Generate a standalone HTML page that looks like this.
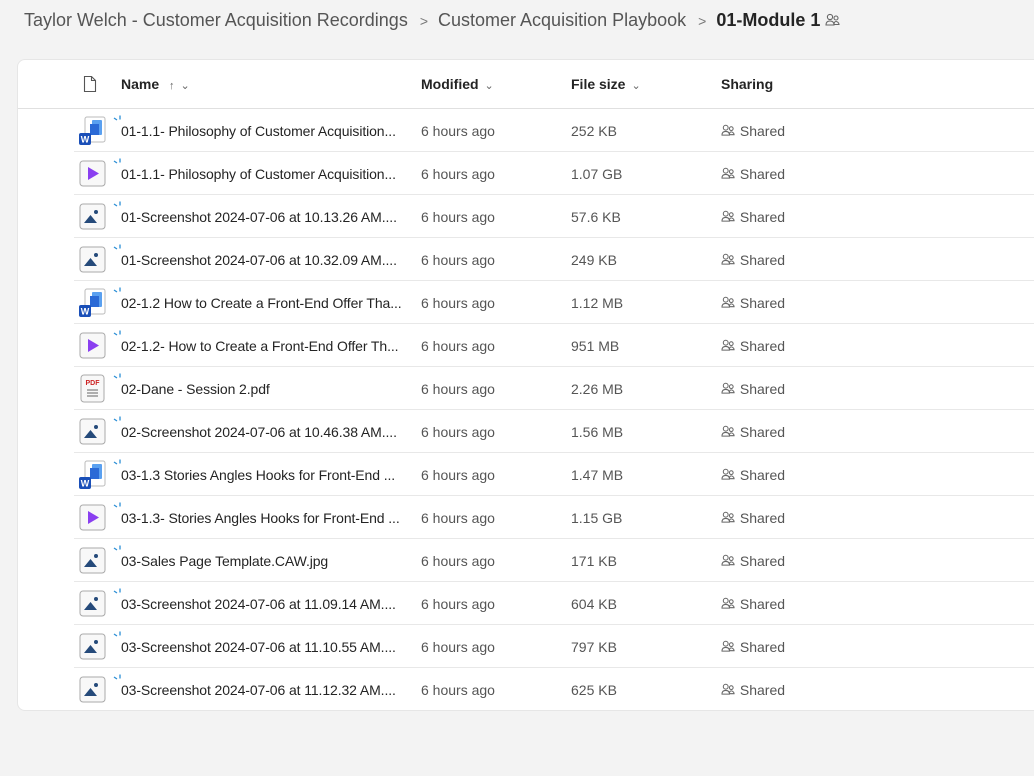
<!DOCTYPE html>
<html><head><meta charset="utf-8"><style>
*{margin:0;padding:0;box-sizing:border-box}
body{width:1034px;height:776px;background:#f3f3f3;font-family:"Liberation Sans",sans-serif;color:#242424;position:relative;overflow:hidden}
.bc{position:absolute;top:9px;left:24px;font-size:18px;color:#555;white-space:nowrap;line-height:22px}
.bc .sep{color:#777;font-size:14px;margin:0 10px 0 12px}
.bc b{color:#242424;font-weight:bold}
.card{position:absolute;left:17px;top:59px;width:1040px;height:652px;background:#fff;border-radius:8px;border:1px solid #e6e6e6}
.hdr{position:absolute;top:0;left:0;right:0;height:49px;border-bottom:1px solid #e0e0e0;font-size:14px;font-weight:bold}
.hdr .h{position:absolute;top:16px;white-space:nowrap}
.chev{color:#666;font-weight:normal;font-size:11px;margin-left:6px}
.row{position:absolute;left:56px;right:0;height:43px;border-bottom:1px solid #e8e8e8;font-size:14px}
.row.last{border-bottom:none}
.row .ic{position:absolute;left:3px;top:6px}
.row .nm{position:absolute;left:47px;top:14px;white-space:nowrap;letter-spacing:-0.1px}
.row .md{position:absolute;left:347px;top:14px;color:#555}
.row .sz{position:absolute;left:497px;top:14px;color:#555}
.row .sh{position:absolute;left:647px;top:14px;color:#555}
.sp{position:absolute;left:39px;top:6px}
</style></head><body>
<div class="bc">Taylor Welch - Customer Acquisition Recordings<span class="sep">&gt;</span>Customer Acquisition Playbook<span class="sep">&gt;</span><b>01-Module 1</b> <svg width="16" height="14" viewBox="0 0 16 14" style="vertical-align:-1px"><circle cx="5" cy="4" r="2.6" fill="none" stroke="#666" stroke-width="1.1"/><circle cx="11" cy="5" r="2" fill="none" stroke="#666" stroke-width="1.1"/><path d="M1 12c0-3 2-4 4-4s4 1 4 4zM9 11.5c0-2 1-3 2-3s3 1 3 3z" fill="none" stroke="#666" stroke-width="1.1"/></svg></div>
<div class="card">
<div class="hdr">
<svg style="position:absolute;left:65px;top:15px" width="14" height="18" viewBox="0 0 14 18"><path d="M1.5 1.5h7l4 4v11h-11z M8.5 1.5v4h4" fill="none" stroke="#555" stroke-width="1.1"/></svg>
<span class="h" style="left:103px">Name <span class="chev">↑</span><span class="chev">&#8964;</span></span>
<span class="h" style="left:403px">Modified<span class="chev">&#8964;</span></span>
<span class="h" style="left:553px">File size<span class="chev">&#8964;</span></span>
<span class="h" style="left:703px">Sharing</span>
</div>
<div id="rows"></div>
</div>
<script>
var W='<svg width="32" height="32" viewBox="0 0 32 32"><rect x="8" y="2" width="20" height="25" rx="2" fill="#fff" stroke="#bbb"/><rect x="15" y="5" width="10" height="15" rx="1" fill="#5aa0f0"/><rect x="13" y="9" width="9" height="11" fill="#2b6ad6"/><rect x="2" y="18" width="12" height="12" rx="2" fill="#1a4fb8"/><text x="8" y="27.5" font-size="9" font-weight="bold" fill="#fff" text-anchor="middle" font-family="Liberation Sans">W</text></svg>';
var V='<svg width="32" height="32" viewBox="0 0 32 32"><rect x="3" y="3" width="25" height="25" rx="3" fill="#f8f8f8" stroke="#aaa"/><path d="M11 9l11 6.5L11 22z" fill="#8a3ff0"/></svg>';
var I='<svg width="32" height="32" viewBox="0 0 32 32"><rect x="3" y="3" width="25" height="25" rx="3" fill="#f8f8f8" stroke="#aaa"/><circle cx="19" cy="11" r="2" fill="#254a7a"/><path d="M7 22L13.5 14L20 22z" fill="#254a7a"/></svg>';
var P='<svg width="32" height="32" viewBox="0 0 32 32"><rect x="4" y="2" width="23" height="27" rx="3" fill="#f8f8f8" stroke="#aaa"/><text x="15.5" y="12" font-size="7" font-weight="bold" fill="#c22" text-anchor="middle" font-family="Liberation Sans">PDF</text><path d="M10 17h11M10 20h11M10 23h11" stroke="#666" stroke-width="1"/></svg>';
var S='<svg class="sp" width="10" height="10" viewBox="0 0 10 10"><path d="M1 3l3 2M7 0.5v4" stroke="#2b8fd6" stroke-width="1.3"/></svg>';
var SH='<svg width="15" height="13" viewBox="0 0 16 14" style="vertical-align:-1px"><circle cx="5" cy="4" r="2.6" fill="none" stroke="#666" stroke-width="1.1"/><circle cx="11" cy="5" r="2" fill="none" stroke="#666" stroke-width="1.1"/><path d="M1 12c0-3 2-4 4-4s4 1 4 4zM9 11.5c0-2 1-3 2-3s3 1 3 3z" fill="none" stroke="#666" stroke-width="1.1"/></svg> Shared';
var d=[[W,'01-1.1- Philosophy of Customer Acquisition...','252 KB'],[V,'01-1.1- Philosophy of Customer Acquisition...','1.07 GB'],[I,'01-Screenshot 2024-07-06 at 10.13.26 AM....','57.6 KB'],[I,'01-Screenshot 2024-07-06 at 10.32.09 AM....','249 KB'],[W,'02-1.2 How to Create a Front-End Offer Tha...','1.12 MB'],[V,'02-1.2- How to Create a Front-End Offer Th...','951 MB'],[P,'02-Dane - Session 2.pdf','2.26 MB'],[I,'02-Screenshot 2024-07-06 at 10.46.38 AM....','1.56 MB'],[W,'03-1.3 Stories Angles Hooks for Front-End ...','1.47 MB'],[V,'03-1.3- Stories Angles Hooks for Front-End ...','1.15 GB'],[I,'03-Sales Page Template.CAW.jpg','171 KB'],[I,'03-Screenshot 2024-07-06 at 11.09.14 AM....','604 KB'],[I,'03-Screenshot 2024-07-06 at 11.10.55 AM....','797 KB'],[I,'03-Screenshot 2024-07-06 at 11.12.32 AM....','625 KB']];
var h='';d.forEach(function(r,i){h+='<div class="row'+(i==13?' last':'')+'" style="top:'+(49+43*i)+'px"><span class="ic">'+r[0]+'</span>'+S+'<span class="nm">'+r[1]+'</span><span class="md">6 hours ago</span><span class="sz">'+r[2]+'</span><span class="sh">'+SH+'</span></div>';});
document.getElementById('rows').innerHTML=h;
</script>
</body></html>
